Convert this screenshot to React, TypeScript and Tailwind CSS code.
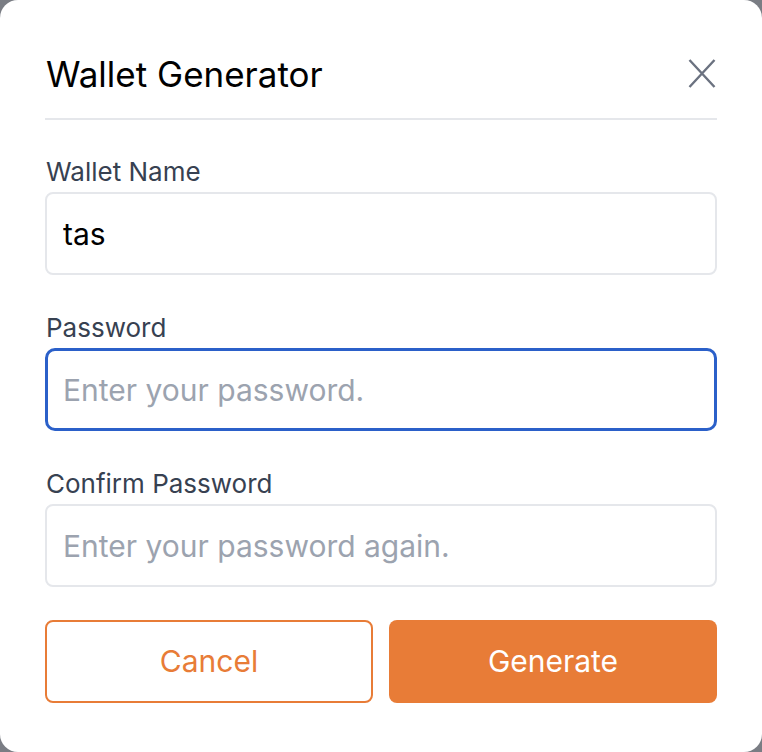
import React from "react";

export default function App() {
  const font = { fontFamily: "Inter, 'Noto Sans', sans-serif" };
  return (
    <div className="w-[762px] h-[752px] bg-[#7a7d84]" style={font}>
      <div className="w-[762px] h-[752px] bg-white rounded-[18px] px-[45px] flex flex-col">
        <div className="h-[118px] flex items-end justify-between pb-[20px]">
          <h1 className="text-[35px] leading-[48px] text-black font-normal pl-[1px]">Wallet Generator</h1>
          <svg width="28" height="29" viewBox="0 0 28 29" className="mb-[10px] mr-[1px]">
            <path d="M1.5 1 L26.5 28 M26.5 1 L1.5 28" stroke="#6b7280" strokeWidth="2.4" fill="none" />
          </svg>
        </div>
        <div className="h-[2px] bg-[#e5e7eb]" />

        <label className="mt-[36px] text-[26px] leading-[32px] text-[#374151] pl-[1px]">Wallet Name</label>
        <input
          defaultValue="tas"
          className="mt-[4px] h-[83px] border-2 border-[#e5e7eb] rounded-[8px] px-[16px] text-[30px] text-black outline-none"
          style={font}
        />

        <label className="mt-[37px] text-[26px] leading-[32px] text-[#374151] pl-[1px]">Password</label>
        <input
          placeholder="Enter your password."
          className="mt-[4px] h-[83px] border-[3px] border-[#2b60c9] rounded-[10px] px-[15px] text-[30px] text-black placeholder:text-[#9ca3af] outline-none"
          style={font}
        />

        <label className="mt-[37px] text-[26px] leading-[32px] text-[#374151] pl-[1px]">Confirm Password</label>
        <input
          placeholder="Enter your password again."
          className="mt-[4px] h-[83px] border-2 border-[#e5e7eb] rounded-[8px] px-[16px] text-[30px] text-black placeholder:text-[#9ca3af] outline-none"
          style={font}
        />

        <div className="mt-[33px] grid grid-cols-2 gap-[16px]">
          <button className="h-[83px] border-2 border-[#e87c37] rounded-[8px] text-[30px] text-[#e87c37] bg-white" style={font}>
            Cancel
          </button>
          <button className="h-[83px] rounded-[8px] text-[30px] text-white bg-[#e87c37]" style={font}>
            Generate
          </button>
        </div>
      </div>
    </div>
  );
}
